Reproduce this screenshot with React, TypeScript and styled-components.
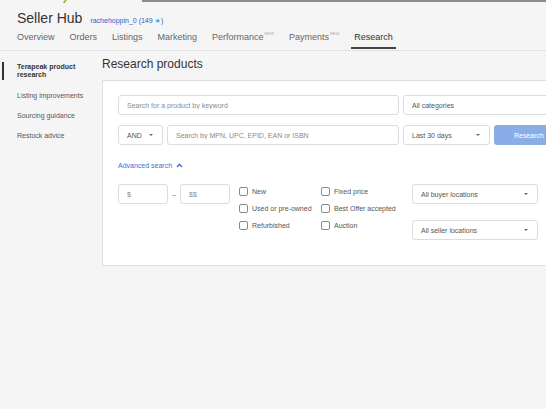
import React from 'react';
import styled, { createGlobalStyle } from 'styled-components';

const GlobalStyle = createGlobalStyle`
  html, body {
    margin: 0;
    padding: 0;
    background: #f5f5f5;
    overflow: hidden;
  }
  body {
    font-family: "Liberation Sans", Arial, sans-serif;
    color: #333;
  }
`;

const navItems = [
  { label: 'Overview' },
  { label: 'Orders' },
  { label: 'Listings' },
  { label: 'Marketing' },
  { label: 'Performance', isNew: true },
  { label: 'Payments', isNew: true },
  { label: 'Research', active: true },
];

const sideItems = [
  { label: 'Terapeak product research', active: true },
  { label: 'Listing improvements' },
  { label: 'Sourcing guidance' },
  { label: 'Restock advice' },
];

const App: React.FC = () => {
  return (
    <Page>
      <GlobalStyle />
      <TopStrip>
        <LogoTail width="6" height="3" viewBox="0 0 6 3">
          <path d="M5 0 L2.6 3" stroke="#86b817" strokeWidth="1.6" />
        </LogoTail>
        <SearchEdge />
      </TopStrip>

      <TitleRow>
        <Title>Seller Hub</Title>
        <UserLink>
          rachehoppin_0 (149 <Star>★</Star>)
        </UserLink>
      </TitleRow>

      <NavRow>
        {navItems.map((item) => (
          <Tab key={item.label} $active={!!item.active}>
            {item.label}
            {item.isNew && <NewTag>NEW</NewTag>}
          </Tab>
        ))}
      </NavRow>

      <Body>
        <Sidebar>
          {sideItems.map((item) => (
            <SideItem key={item.label} $active={!!item.active}>
              {item.label}
            </SideItem>
          ))}
        </Sidebar>

        <Main>
          <Heading>Research products</Heading>
          <Card>
            <FieldRow>
              <TextInput $w={281} placeholder="Search for a product by keyword" />
              <Select $w={170}>All categories</Select>
            </FieldRow>

            <FieldRow $top={10}>
              <Select $w={45}>
                AND
                <Caret />
              </Select>
              <TextInput $w={232} placeholder="Search by MPN, UPC, EPID, EAN or ISBN" />
              <Select $w={87}>
                Last 30 days
                <Caret />
              </Select>
              <ResearchButton>Research</ResearchButton>
            </FieldRow>

            <AdvancedLink>
              Advanced search
              <svg width="7" height="5" viewBox="0 0 7 5">
                <path d="M1 4 L3.5 1.3 L6 4" fill="none" stroke="#3a6fd6" strokeWidth="1.3" />
              </svg>
            </AdvancedLink>

            <AdvancedRow>
              <PriceGroup>
                <TextInput $w={50} placeholder="$" />
                <Dash>–</Dash>
                <TextInput $w={50} placeholder="$$" />
              </PriceGroup>

              <CheckCol $w={82}>
                <CheckRow><Box />New</CheckRow>
                <CheckRow><Box />Used or pre-owned</CheckRow>
                <CheckRow><Box />Refurbished</CheckRow>
              </CheckCol>

              <CheckCol $w={91}>
                <CheckRow><Box />Fixed price</CheckRow>
                <CheckRow><Box />Best Offer accepted</CheckRow>
                <CheckRow><Box />Auction</CheckRow>
              </CheckCol>

              <SelectCol>
                <Select $w={126}>
                  All buyer locations
                  <Caret />
                </Select>
                <Select $w={126}>
                  All seller locations
                  <Caret />
                </Select>
              </SelectCol>
            </AdvancedRow>
          </Card>
        </Main>
      </Body>
    </Page>
  );
};

export default App;

const Page = styled.div`
  width: 546px;
  height: 409px;
  background: #f5f5f5;
`;

const TopStrip = styled.div`
  display: flex;
  align-items: flex-start;
  height: 3px;
`;

const LogoTail = styled.svg`
  display: block;
  margin-left: 61px;
`;

const SearchEdge = styled.div`
  flex: 1;
  height: 2px;
  margin-left: 75px;
  background: #8a8a8a;
`;

const TitleRow = styled.div`
  display: flex;
  align-items: baseline;
  gap: 8px;
  height: 20px;
  margin-top: 5px;
  padding-left: 17px;
`;

const Title = styled.h1`
  margin: 0;
  font-size: 14px;
  line-height: 20px;
  font-weight: normal;
  color: #333;
`;

const UserLink = styled.span`
  font-size: 7px;
  color: #2a62c9;
`;

const Star = styled.span`
  color: #3fa2e8;
  font-family: "DejaVu Sans", sans-serif;
  font-size: 7px;
`;

const NavRow = styled.nav`
  display: flex;
  gap: 9px;
  padding: 0 0 1px 14px;
  border-bottom: 1px solid #e2e2e2;
`;

const Tab = styled.div<{ $active: boolean }>`
  padding: 0 3px 1px;
  font-size: 9px;
  line-height: 18px;
  color: ${(p) => (p.$active ? '#333' : '#666')};
  border-bottom: 2px solid ${(p) => (p.$active ? '#444' : 'transparent')};
`;

const NewTag = styled.sup`
  font-size: 4px;
  line-height: 0;
  vertical-align: 5px;
  margin-left: 1px;
  color: #aaa;
`;

const Body = styled.div`
  display: flex;
  padding-top: 5px;
`;

const Sidebar = styled.aside`
  width: 102px;
  flex-shrink: 0;
  box-sizing: border-box;
  padding: 1px 16px 0 17px;
`;

const SideItem = styled.div<{ $active: boolean }>`
  position: relative;
  padding: ${(p) => (p.$active ? '6px 0 7px' : '6px 0')};
  font-size: 7px;
  line-height: 8px;
  font-weight: ${(p) => (p.$active ? 'bold' : 'normal')};
  color: ${(p) => (p.$active ? '#333' : '#555')};

  &::before {
    content: '';
    display: ${(p) => (p.$active ? 'block' : 'none')};
    position: absolute;
    left: -15px;
    top: 5px;
    bottom: 6px;
    width: 2px;
    background: #333;
  }
`;

const Main = styled.main`
  flex: 1;
  min-width: 0;
`;

const Heading = styled.h2`
  margin: 0 0 8px;
  font-size: 12px;
  line-height: 16px;
  font-weight: normal;
  color: #333;
`;

const Card = styled.section`
  width: 600px;
  box-sizing: border-box;
  background: #fff;
  border: 1px solid #dedede;
  padding: 14px 0 25px 15px;
`;

const FieldRow = styled.div<{ $top?: number }>`
  display: flex;
  gap: 4px;
  margin-top: ${(p) => p.$top ?? 0}px;
`;

const TextInput = styled.input<{ $w: number }>`
  width: ${(p) => p.$w}px;
  height: 20px;
  box-sizing: border-box;
  margin: 0;
  padding: 0 8px;
  border: 1px solid #dcdcdc;
  border-radius: 3px;
  background: #fff;
  font-family: "Liberation Sans", Arial, sans-serif;
  font-size: 7px;
  color: #333;
  outline: none;

  &::placeholder {
    color: #8a8a8a;
  }
`;

const Select = styled.div<{ $w: number }>`
  display: flex;
  align-items: center;
  justify-content: space-between;
  width: ${(p) => p.$w}px;
  height: 20px;
  box-sizing: border-box;
  padding: 0 9px 0 8px;
  border: 1px solid #dcdcdc;
  border-radius: 3px;
  background: #fff;
  font-size: 7px;
  color: #555;
  flex-shrink: 0;
`;

const Caret = styled.span`
  width: 0;
  height: 0;
  border-left: 2px solid transparent;
  border-right: 2px solid transparent;
  border-top: 2px solid #666;
`;

const ResearchButton = styled.button`
  width: 70px;
  height: 20px;
  margin: 0;
  padding: 0;
  border: none;
  border-radius: 3px;
  background: #89ade6;
  color: #fff;
  font-family: "Liberation Sans", Arial, sans-serif;
  font-size: 7px;
  flex-shrink: 0;
`;

const AdvancedLink = styled.div`
  display: flex;
  align-items: center;
  gap: 4px;
  margin-top: 15px;
  height: 10px;
  font-size: 7px;
  color: #3a6fd6;
`;

const AdvancedRow = styled.div`
  display: flex;
  align-items: flex-start;
  margin-top: 14px;
`;

const PriceGroup = styled.div`
  display: flex;
  align-items: center;
  margin-right: 9px;
`;

const Dash = styled.span`
  width: 12px;
  text-align: center;
  font-size: 7px;
  color: #777;
`;

const CheckCol = styled.div<{ $w: number }>`
  display: flex;
  flex-direction: column;
  gap: 2px;
  width: ${(p) => p.$w}px;
`;

const CheckRow = styled.label`
  display: flex;
  align-items: center;
  gap: 4px;
  height: 15px;
  font-size: 7px;
  color: #555;
  white-space: nowrap;
`;

const Box = styled.span`
  width: 9px;
  height: 9px;
  box-sizing: border-box;
  border: 1px solid #8a8a8a;
  border-radius: 2px;
  background: #fff;
  flex-shrink: 0;
`;

const SelectCol = styled.div`
  display: flex;
  flex-direction: column;
  gap: 16px;
`;
